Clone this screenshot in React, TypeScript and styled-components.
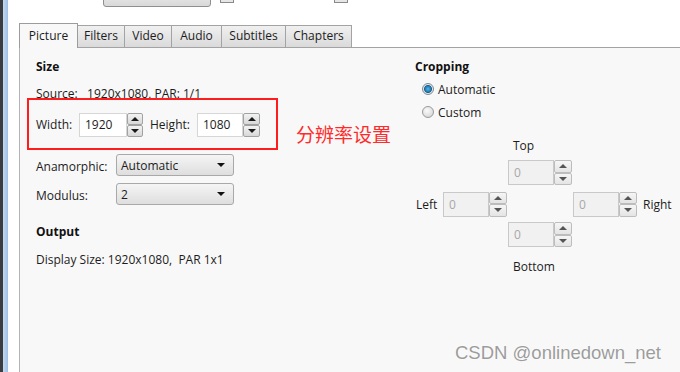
import React from "react";
import styled, { createGlobalStyle, css } from "styled-components";

const GlobalStyle = createGlobalStyle`
  html, body {
    margin: 0;
    padding: 0;
    background: #ffffff;
  }
  body {
    width: 680px;
    height: 372px;
    overflow: hidden;
    font-family: "Open Sans", "Noto Sans", sans-serif;
    font-size: 12px;
    color: #1c1c1c;
  }
`;

const Screen = styled.div`
  position: relative;
  display: flex;
  width: 680px;
  height: 372px;
  overflow: hidden;
`;
const DarkEdge = styled.div`
  width: 3px;
  flex-shrink: 0;
  background: #3b3c3f;
`;
const BlueEdge = styled.div`
  width: 5px;
  flex-shrink: 0;
  background: linear-gradient(to right, #c4d9ef, #9dbfe4);
`;
const Content = styled.div`
  flex: 1;
  min-width: 0;
  display: flex;
  flex-direction: column;
  background: #ffffff;
`;

/* top strip: bottom edge of the toolbar above, mostly cut off */
const TopStrip = styled.div`
  height: 8px;
  flex-shrink: 0;
  display: flex;
  align-items: flex-end;
  overflow: hidden;
  padding-left: 95px;
`;
const CutButton = styled.div`
  width: 108px;
  height: 20px;
  margin-bottom: 1px;
  box-sizing: border-box;
  border: 1px solid #8f8f8f;
  border-radius: 3px;
  background: linear-gradient(#f0f0f0, #d9d9d9);
`;
const CutCheck = styled.div<{ $ml: number }>`
  width: 14px;
  height: 14px;
  margin-left: ${(p) => p.$ml}px;
  margin-bottom: 5px;
  box-sizing: border-box;
  border: 1px solid #8a8a8a;
  background: #e6e6e6;
`;
const CutGap = styled.div<{ $w: number }>`
  width: ${(p) => p.$w}px;
  margin-left: 4px;
`;

const TabArea = styled.div`
  flex: 1;
  display: flex;
  flex-direction: column;
  margin-left: 11px;
  margin-top: 15px;
`;
const TabRow = styled.div`
  height: 24px;
  display: flex;
  align-items: flex-end;
`;
const Tab = styled.div<{ $w: number; $active?: boolean }>`
  position: relative;
  width: ${(p) => p.$w}px;
  box-sizing: border-box;
  text-align: center;
  line-height: 16px;
  border: 1px solid #a3a3a3;
  border-bottom: none;
  margin-left: -1px;
  &:first-child {
    margin-left: 0;
  }
  ${(p) =>
    p.$active
      ? css`
          height: 25px;
          margin-bottom: -1px;
          padding-top: 4px;
          background: #f8f8f8;
          z-index: 1;
          border-color: #9c9c9c;
        `
      : css`
          height: 22px;
          padding-top: 2px;
          background: linear-gradient(#f0f0f0, #dadada);
        `}
`;

const Panel = styled.div`
  flex: 1;
  display: grid;
  grid-template-columns: 395px 1fr;
  align-items: start;
  padding-top: 11px;
  background: #f8f8f8;
  border-top: 1px solid #a3a3a3;
  border-left: 1px solid #b2b2ba;
`;
const LeftCol = styled.div`
  display: flex;
  flex-direction: column;
  padding-left: 16px;
`;
const RightCol = styled.div`
  display: flex;
  flex-direction: column;
`;

const Heading = styled.div<{ $mt?: number }>`
  height: 16px;
  line-height: 16px;
  margin-top: ${(p) => p.$mt ?? 0}px;
  font-weight: 700;
  color: #111;
`;
const TextLine = styled.div<{ $mt?: number }>`
  height: 16px;
  line-height: 16px;
  margin-top: ${(p) => p.$mt ?? 0}px;
  white-space: nowrap;
`;

const HighlightRow = styled.div`
  display: flex;
  align-items: flex-end;
  margin-top: -4px;
  margin-left: -9px;
`;
const HighlightBox = styled.div`
  width: 251px;
  height: 52px;
  box-sizing: border-box;
  border: 2px solid #ff1c1c;
  display: flex;
  align-items: center;
  padding-left: 7px;
  padding-top: 1px;
`;
const Note = styled.div`
  margin-left: 18px;
  margin-bottom: 4px;
  font-family: "Noto Sans CJK SC", "Noto Sans", sans-serif;
  font-size: 19px;
  line-height: 24px;
  color: #ff2b2b;
`;

const FieldLabel = styled.div<{ $w: number; $ml?: number; $pt?: number }>`
  width: ${(p) => p.$w}px;
  margin-left: ${(p) => p.$ml ?? 0}px;
  padding-top: ${(p) => p.$pt ?? 0}px;
  flex-shrink: 0;
  line-height: 16px;
  white-space: nowrap;
`;

const Spin = styled.div`
  display: flex;
`;
const SpinField = styled.div<{ $w: number; $h: number; $off?: boolean }>`
  width: ${(p) => p.$w}px;
  height: ${(p) => p.$h}px;
  box-sizing: border-box;
  padding-left: 5px;
  line-height: ${(p) => p.$h - 2}px;
  border: 1px solid ${(p) => (p.$off ? "#c9c9c9" : "#d6d6d6")};
  background: ${(p) => (p.$off ? "#f1f1f1" : "#ffffff")};
  color: ${(p) => (p.$off ? "#a8a8a8" : "#1c1c1c")};
`;
const SpinButtons = styled.div<{ $w: number }>`
  width: ${(p) => p.$w}px;
  display: flex;
  flex-direction: column;
`;
const SpinBtn = styled.div<{ $down?: boolean; $off?: boolean }>`
  flex: 1;
  display: flex;
  align-items: center;
  justify-content: center;
  border: 1px solid ${(p) => (p.$off ? "#bdbdbd" : "#a2a2a2")};
  border-radius: 2px;
  background: ${(p) =>
    p.$off
      ? "linear-gradient(#f6f6f6, #e4e4e4)"
      : "linear-gradient(#f3f3f3, #d8d8d8)"};
  &::after {
    content: "";
    width: 0;
    height: 0;
    border-left: 4px solid transparent;
    border-right: 4px solid transparent;
    ${(p) =>
      p.$down
        ? css`
            border-top: 4px solid ${p.$off ? "#555" : "#1a1a1a"};
          `
        : css`
            border-bottom: 4px solid ${p.$off ? "#555" : "#1a1a1a"};
          `}
  }
`;

const SelectRow = styled.div<{ $mt: number }>`
  display: flex;
  align-items: center;
  margin-top: ${(p) => p.$mt}px;
`;
const Select = styled.div`
  width: 118px;
  height: 22px;
  box-sizing: border-box;
  display: flex;
  align-items: center;
  justify-content: space-between;
  padding: 0 8px 0 4px;
  border: 1px solid #a9a9a9;
  border-radius: 3px;
  background: linear-gradient(#f5f5f5, #dedede);
  &::after {
    content: "";
    border-left: 4px solid transparent;
    border-right: 4px solid transparent;
    border-top: 4px solid #111;
  }
`;

const RadioRow = styled.div<{ $mt: number }>`
  display: flex;
  align-items: center;
  height: 16px;
  margin-top: ${(p) => p.$mt}px;
  padding-left: 7px;
`;
const RadioDot = styled.div<{ $on?: boolean }>`
  width: 12px;
  height: 12px;
  box-sizing: border-box;
  border-radius: 50%;
  margin-right: 4px;
  border: 1px solid ${(p) => (p.$on ? "#7d8a94" : "#9a9a9a")};
  background: ${(p) =>
    p.$on
      ? "radial-gradient(circle, #52b6e8 0, #1d79b0 3px, #2a5d80 3.6px, #e3ebf1 4.4px, #c9d0d6 100%)"
      : "radial-gradient(circle at 40% 35%, #fbfbfb, #cfcfcf)"};
`;

const CropGrid = styled.div`
  display: grid;
  grid-template-columns: 28px 65px 65px 64px auto;
  grid-template-rows: 16px 25px 25px 25px 16px;
  row-gap: 6px;
  align-items: center;
  margin-top: 18px;
`;
const CropLabel = styled.div<{ $col: number; $row: number; $pl?: number; $mt?: number }>`
  grid-column: ${(p) => p.$col};
  grid-row: ${(p) => p.$row};
  padding-left: ${(p) => p.$pl ?? 0}px;
  margin-top: ${(p) => p.$mt ?? 0}px;
  line-height: 16px;
  white-space: nowrap;
`;
const CropCell = styled.div<{ $col: number; $row: number; $mt?: number }>`
  grid-column: ${(p) => p.$col};
  grid-row: ${(p) => p.$row};
  margin-top: ${(p) => p.$mt ?? 0}px;
`;

const Watermark = styled.div`
  position: absolute;
  left: 455px;
  bottom: 8px;
  font-family: "Liberation Sans", Arial, sans-serif;
  font-size: 18.5px;
  line-height: 22px;
  color: #9c9c9c;
  text-shadow: 0 0 1px #ffffff, 0 0 2px #ffffff;
  white-space: nowrap;
`;

interface SpinBoxProps {
  value: string;
  fieldWidth: number;
  buttonWidth: number;
  height: number;
  disabled?: boolean;
}

const SpinBox: React.FunctionComponent<SpinBoxProps> = ({
  value,
  fieldWidth,
  buttonWidth,
  height,
  disabled,
}) => (
  <Spin>
    <SpinField $w={fieldWidth} $h={height} $off={disabled}>
      {value}
    </SpinField>
    <SpinButtons $w={buttonWidth}>
      <SpinBtn $off={disabled} />
      <SpinBtn $down $off={disabled} />
    </SpinButtons>
  </Spin>
);

const CropSpin = ({ col, row, mt }: { col: number; row: number; mt?: number }) => (
  <CropCell $col={col} $row={row} $mt={mt}>
    <SpinBox value="0" fieldWidth={46} buttonWidth={18} height={25} disabled />
  </CropCell>
);

const tabs = [
  { name: "Picture", w: 59 },
  { name: "Filters", w: 48 },
  { name: "Video", w: 48 },
  { name: "Audio", w: 51 },
  { name: "Subtitles", w: 65 },
  { name: "Chapters", w: 67 },
];

const App: React.FunctionComponent = () => {
  return (
    <Screen>
      <GlobalStyle />
      <DarkEdge />
      <BlueEdge />
      <Content>
        <TopStrip>
          <CutButton />
          <CutCheck $ml={9} />
          <CutGap $w={87} />
          <CutCheck $ml={9} />
        </TopStrip>
        <TabArea>
          <TabRow>
            {tabs.map((t, i) => (
              <Tab key={t.name} $w={t.w} $active={i === 0}>
                {t.name}
              </Tab>
            ))}
          </TabRow>
          <Panel>
            <LeftCol>
              <Heading>Size</Heading>
              <TextLine $mt={11}>Source:&nbsp;&nbsp; 1920x1080, PAR: 1/1</TextLine>
              <HighlightRow>
                <HighlightBox>
                  <FieldLabel $w={43}>Width:</FieldLabel>
                  <SpinBox value="1920" fieldWidth={48} buttonWidth={16} height={24} />
                  <FieldLabel $w={47} $ml={7}>
                    Height:
                  </FieldLabel>
                  <SpinBox value="1080" fieldWidth={46} buttonWidth={17} height={24} />
                </HighlightBox>
                <Note>分辨率设置</Note>
              </HighlightRow>
              <SelectRow $mt={4}>
                <FieldLabel $w={80} $pt={3}>
                  Anamorphic:
                </FieldLabel>
                <Select>Automatic</Select>
              </SelectRow>
              <SelectRow $mt={7}>
                <FieldLabel $w={80} $pt={4}>
                  Modulus:
                </FieldLabel>
                <Select>2</Select>
              </SelectRow>
              <Heading $mt={19}>Output</Heading>
              <TextLine $mt={12}>Display Size: 1920x1080,&nbsp; PAR 1x1</TextLine>
            </LeftCol>
            <RightCol>
              <Heading>Cropping</Heading>
              <RadioRow $mt={6}>
                <RadioDot $on />
                Automatic
              </RadioRow>
              <RadioRow $mt={7}>
                <RadioDot />
                Custom
              </RadioRow>
              <CropGrid>
                <CropLabel $col={3} $row={1} $pl={5}>
                  Top
                </CropLabel>
                <CropSpin col={3} row={2} />
                <CropLabel $col={1} $row={3} $pl={1} $mt={2}>
                  Left
                </CropLabel>
                <CropSpin col={2} row={3} mt={1} />
                <CropSpin col={4} row={3} mt={1} />
                <CropLabel $col={5} $row={3} $pl={6} $mt={2}>
                  Right
                </CropLabel>
                <CropSpin col={3} row={4} />
                <CropLabel $col={3} $row={5} $pl={5} $mt={12}>
                  Bottom
                </CropLabel>
              </CropGrid>
            </RightCol>
          </Panel>
        </TabArea>
      </Content>
      <Watermark>CSDN @onlinedown_net</Watermark>
    </Screen>
  );
};

export default App;
